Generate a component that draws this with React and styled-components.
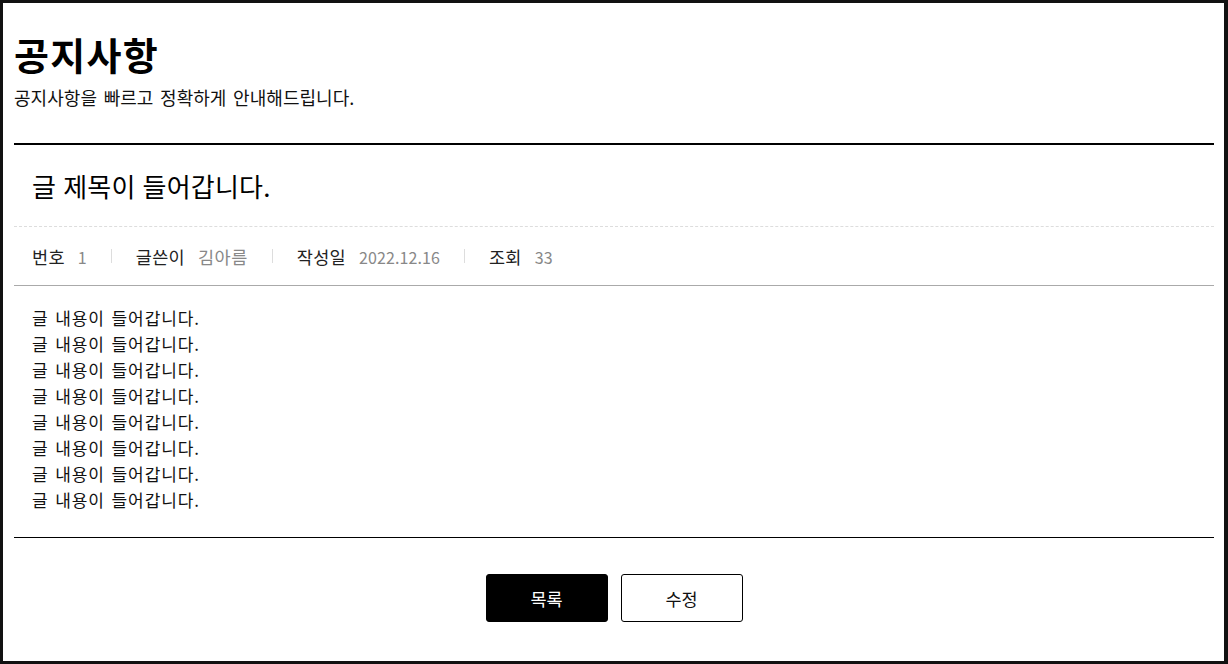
import React from "react";
import styled, { createGlobalStyle } from "styled-components";

const Global = createGlobalStyle`
  html, body { margin: 0; padding: 0; background: #fff; }
  * { box-sizing: border-box; }
  body { font-family: "Noto Sans CJK KR", "Noto Sans", sans-serif; color: #111; }
`;

const Frame = styled.div`
  width: 1228px;
  height: 664px;
  border-style: solid;
  border-color: #111;
  border-width: 3px 4px 3px 3px;
  padding: 0 0 0 11px;
  overflow: hidden;
`;

const Page = styled.div`
  width: 1200px;
`;

const Header = styled.header`
  padding-top: 29px;
  padding-bottom: 35px;
`;

const Heading = styled.h1`
  margin: 0;
  font-size: 38px;
  line-height: 44px;
  font-weight: 700;
  letter-spacing: 1.3px;
  color: #000;
`;

const Sub = styled.p`
  margin: 10px 0 0;
  font-size: 18px;
  line-height: 22px;
  color: #111;
  word-spacing: 2.5px;
  letter-spacing: 0.05px;
`;

const Article = styled.article`
  border-top: 2px solid #000;
  border-bottom: 1px solid #000;
`;

const Title = styled.h2`
  margin: 0;
  padding: 24px 18px 23px;
  font-size: 26px;
  line-height: 34px;
  font-weight: 400;
  color: #000;
  border-bottom: 1px dashed #ddd;
  word-spacing: 1px;
  letter-spacing: 0.2px;
`;

const Meta = styled.ul`
  list-style: none;
  margin: 0;
  padding: 18px 18px 16px;
  display: flex;
  align-items: center;
  border-bottom: 1px solid #aaa;
`;

const MetaItem = styled.li`
  display: flex;
  align-items: center;
  line-height: 24px;
  padding: 0 24px 0 25px;
  position: relative;
  &:first-child { padding-left: 0; }
  & + &::before {
    content: "";
    position: absolute;
    left: 0;
    top: 4px;
    width: 1px;
    height: 14px;
    background: #ddd;
  }
`;

const Label = styled.span`
  color: #222;
  font-size: 17.5px;
  letter-spacing: 0.3px;
`;

const Value = styled.span`
  color: #888;
  font-size: ${(p) => (p.$num ? "16px" : "17.5px")};
  letter-spacing: ${(p) => (p.$num ? "0.1px" : "0.5px")};
  margin-left: 13px;
`;

const Body = styled.div`
  padding: 19px 18px 24px;
  font-size: 17px;
  line-height: 26px;
  color: #111;
  word-spacing: 2px;
  letter-spacing: 0.9px;
`;

const Line = styled.p`
  margin: 0;
`;

const Actions = styled.div`
  display: flex;
  justify-content: center;
  gap: 13px;
  padding-top: 36px;
`;

const Button = styled.button`
  width: 122px;
  height: 48px;
  border-radius: 3px;
  border: 1px solid #000;
  background: ${(p) => (p.$primary ? "#000" : "#fff")};
  color: ${(p) => (p.$primary ? "#fff" : "#111")};
  font-family: "Noto Sans CJK KR", "Noto Sans", sans-serif;
  font-size: 17.5px;
  cursor: pointer;
`;

const meta = [
  ["번호", "1"],
  ["글쓴이", "김아름"],
  ["작성일", "2022.12.16"],
  ["조회", "33"],
];

export default function App() {
  return (
    <>
      <Global />
      <Frame>
        <Page>
          <Header>
            <Heading>공지사항</Heading>
            <Sub>공지사항을 빠르고 정확하게 안내해드립니다.</Sub>
          </Header>
          <Article>
            <Title>글 제목이 들어갑니다.</Title>
            <Meta>
              {meta.map(([l, v]) => (
                <MetaItem key={l}>
                  <Label>{l}</Label>
                  <Value $num={/^[\d.]+$/.test(v)}>{v}</Value>
                </MetaItem>
              ))}
            </Meta>
            <Body>
              {Array.from({ length: 8 }).map((_, i) => (
                <Line key={i}>글 내용이 들어갑니다.</Line>
              ))}
            </Body>
          </Article>
          <Actions>
            <Button $primary>목록</Button>
            <Button>수정</Button>
          </Actions>
        </Page>
      </Frame>
    </>
  );
}
